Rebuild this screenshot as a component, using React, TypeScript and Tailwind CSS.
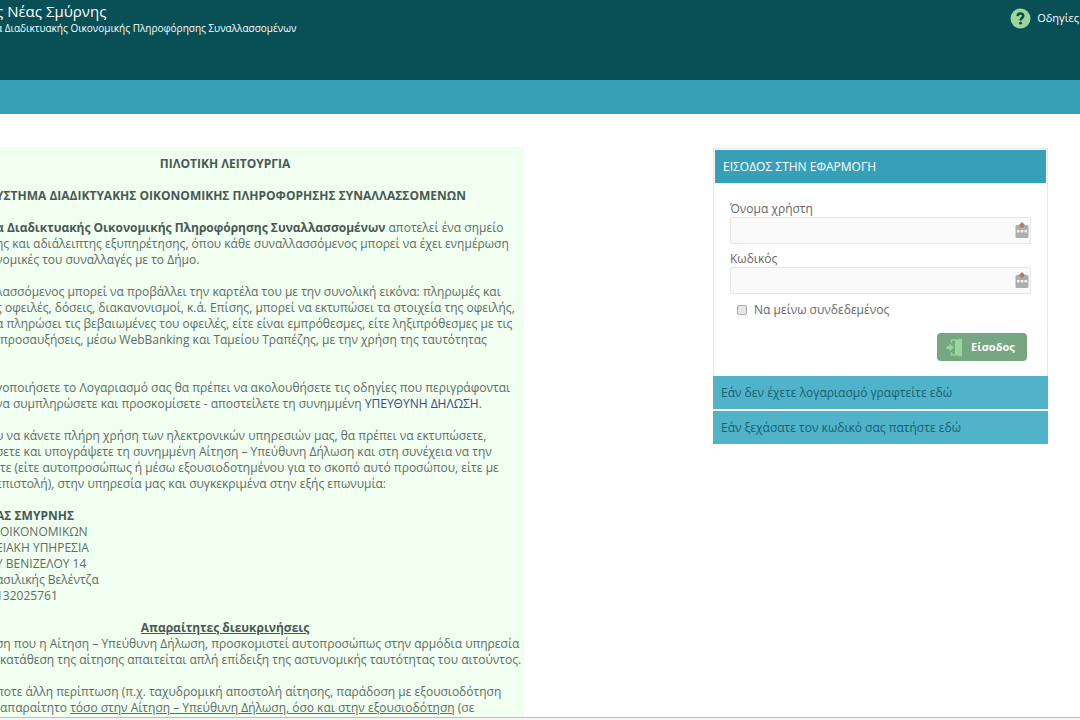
import type { ReactNode } from "react";

type LineProps = { children?: ReactNode; className?: string };

function Line({ children, className = "" }: LineProps) {
  return <div className={`h-4 whitespace-nowrap ${className}`}>{children}</div>;
}

function HelpIcon() {
  return (
    <svg width="21" height="21" viewBox="0 0 21 21" aria-hidden="true">
      <circle cx="10.5" cy="10.5" r="10" fill="#9bd59a" />
      <path
        d="M7.6 8.1C7.7 6.2 8.9 5.5 10.4 5.5C12.2 5.5 13.3 6.5 13.3 7.9C13.3 10 10.6 10.1 10.6 12.4"
        fill="none"
        stroke="#0b4a42"
        strokeWidth="2.4"
      />
      <circle cx="10.6" cy="15.2" r="1.4" fill="#0b4a42" />
    </svg>
  );
}

function KeyboardIcon() {
  return (
    <svg width="14" height="17" viewBox="0 0 14 17" aria-hidden="true">
      <rect x="0.5" y="3" width="13" height="13" rx="1.5" fill="#adadad" />
      <path d="M7 0L10.5 3.5H8.5V5.5H5.5V3.5H3.5Z" fill="#b9716c" />
      <path d="M2 8H4.5V10.5H2ZM5.75 8H8.25V10.5H5.75ZM9.5 8H12V10.5H9.5Z" fill="#f3f3f3" />
    </svg>
  );
}

function EnterIcon() {
  return (
    <svg width="17" height="19" viewBox="0 0 17 19" aria-hidden="true">
      <path d="M9 2.5L13 0.8H16V18.2H13L9 16.5Z" fill="#98d69b" />
      <path d="M5.5 5V2H10M5.5 14V17H10" fill="none" stroke="#98d69b" strokeWidth="1.4" />
      <path d="M0.5 8H3.5V5.5L8 9.5L3.5 13.5V11H0.5Z" fill="#98d69b" />
    </svg>
  );
}

function Header() {
  return (
    <header className="shrink-0">
      <div className="flex h-20 justify-between bg-[#084f56] text-white">
        <div className="-ml-1 whitespace-nowrap pt-px">
          <h1 className="text-[15px] leading-5">ς Νέας Σμύρνης</h1>
          <p className="text-[10px] leading-[14px]">
            α Διαδικτυακής Οικονομικής Πληροφόρησης Συναλλασσομένων
          </p>
        </div>
        <a href="#help" className="flex h-9 items-center gap-1.5 pr-px text-[11px]">
          <HelpIcon />
          Οδηγίες
        </a>
      </div>
      <div className="h-[34px] bg-[#389fb8]" />
    </header>
  );
}

function Announcement() {
  return (
    <article className="min-w-0 flex-1 overflow-hidden bg-[#f0fff0] pt-[9px] text-[12px] leading-4 text-[#5f6b67]">
      <div className="-ml-1">
        <Line className="pr-[70px] text-center font-bold text-[#4a5854]">ΠΙΛΟΤΙΚΗ ΛΕΙΤΟΥΡΓΙΑ</Line>
        <Line />
        <Line className="font-bold text-[#4a5854]">
          ΥΣΤΗΜΑ ΔΙΑΔΙΚΤΥΑΚΗΣ ΟΙΚΟΝΟΜΙΚΗΣ ΠΛΗΡΟΦΟΡΗΣΗΣ ΣΥΝΑΛΛΑΣΣΟΜΕΝΩΝ
        </Line>
        <Line />
        <Line>
          <b className="text-[#4a5854]">α Διαδικτυακής Οικονομικής Πληροφόρησης Συναλλασσομένων</b> αποτελεί ένα σημείο
        </Line>
        <Line>ης και αδιάλειπτης εξυπηρέτησης, όπου κάθε συναλλασσόμενος μπορεί να έχει ενημέρωση</Line>
        <Line>νομικές του συναλλαγές με το Δήμο.</Line>
        <Line />
        <Line>λασσόμενος μπορεί να προβάλλει την καρτέλα του με την συνολική εικόνα: πληρωμές και</Line>
        <Line>ς οφειλές, δόσεις, διακανονισμοί, κ.ά. Επίσης, μπορεί να εκτυπώσει τα στοιχεία της οφειλής,</Line>
        <Line>α πληρώσει τις βεβαιωμένες του οφειλές, είτε είναι εμπρόθεσμες, είτε ληξιπρόθεσμες με τις</Line>
        <Line className="pl-1">προσαυξήσεις, μέσω WebBanking και Ταμείου Τραπέζης, με την χρήση της ταυτότητας</Line>
        <Line />
        <Line />
        <Line>γοποιήσετε το Λογαριασμό σας θα πρέπει να ακολουθήσετε τις οδηγίες που περιγράφονται</Line>
        <Line>
          να συμπληρώσετε και προσκομίσετε - αποστείλετε τη συνημμένη{" "}
          <a href="#declaration" className="text-[#3b4a84]">ΥΠΕΥΘΥΝΗ ΔΗΛΩΣΗ</a>.
        </Line>
        <Line />
        <Line>υ να κάνετε πλήρη χρήση των ηλεκτρονικών υπηρεσιών μας, θα πρέπει να εκτυπώσετε,</Line>
        <Line>σετε και υπογράψετε τη συνημμένη Αίτηση – Υπεύθυνη Δήλωση και στη συνέχεια να την</Line>
        <Line className="pl-1">τε (είτε αυτοπροσώπως ή μέσω εξουσιοδοτημένου για το σκοπό αυτό προσώπου, είτε με</Line>
        <Line>επιστολή), στην υπηρεσία μας και συγκεκριμένα στην εξής επωνυμία:</Line>
        <Line />
        <Line className="font-bold text-[#4a5854]">ΑΣ ΣΜΥΡΝΗΣ</Line>
        <Line className="pl-1">ΟΙΚΟΝΟΜΙΚΩΝ</Line>
        <Line>ΕΙΑΚΗ ΥΠΗΡΕΣΙΑ</Line>
        <Line>Υ ΒΕΝΙΖΕΛΟΥ 14</Line>
        <Line>ασιλικής Βελέντζα</Line>
        <Line>132025761</Line>
        <Line />
        <Line className="pr-[70px] text-center font-bold text-[#4a5854] underline">Απαραίτητες διευκρινήσεις</Line>
        <Line>ση που η Αίτηση – Υπεύθυνη Δήλωση, προσκομιστεί αυτοπροσώπως στην αρμόδια υπηρεσία</Line>
        <Line className="pl-1">κατάθεση της αίτησης απαιτείται απλή επίδειξη της αστυνομικής ταυτότητας του αιτούντος.</Line>
        <Line />
        <Line>ποτε άλλη περίπτωση (π.χ. ταχυδρομική αποστολή αίτησης, παράδοση με εξουσιοδότηση</Line>
        <Line className="pl-1">
          απαραίτητο <u>τόσο στην Αίτηση – Υπεύθυνη Δήλωση, όσο και στην εξουσιοδότηση</u> (σε
        </Line>
      </div>
    </article>
  );
}

type FieldProps = { id: string; label: string; type: string };

function Field({ id, label, type }: FieldProps) {
  return (
    <div>
      <label htmlFor={id} className="block leading-4">{label}</label>
      <div className="flex h-[27px] items-center rounded-xs border border-[#e6e6e6] bg-[#fafafa] pr-px">
        <input id={id} type={type} className="h-full min-w-0 flex-1 px-2 outline-none" />
        <button type="button" aria-label="Πληκτρολόγιο">
          <KeyboardIcon />
        </button>
      </div>
    </div>
  );
}

function LoginPanel() {
  return (
    <aside className="w-[335px] shrink-0 self-start text-[12px] text-[#666]">
      <form className="mt-px border border-b-0 border-[#e4e8e8] p-px" onSubmit={(e) => e.preventDefault()}>
        <h2 className="flex h-[33px] items-center bg-[#389fb8] px-2 text-white">ΕΙΣΟΔΟΣ ΣΤΗΝ ΕΦΑΡΜΟΓΗ</h2>
        <div className="flex flex-col gap-[7px] px-[15px] pt-[18px] pb-[14px]">
          <Field id="username" label="Όνομα χρήστη" type="text" />
          <Field id="password" label="Κωδικός" type="password" />
          <label className="flex h-4 items-center gap-[7px] pt-px pl-[7px]">
            <input
              type="checkbox"
              className="size-[10px] appearance-none rounded-xs border border-[#aaa] bg-[#e6e6e6] checked:bg-[#389fb8]"
            />
            Να μείνω συνδεδεμένος
          </label>
          <button
            type="submit"
            className="mt-[9px] mr-1 flex h-7 w-[90px] items-center gap-2 self-end rounded-sm bg-[#76a682] pl-[9px] text-[11px] font-bold text-white"
          >
            <EnterIcon />
            Είσοδος
          </button>
        </div>
      </form>
      <nav className="flex flex-col gap-0.5 text-[#17606c]">
        <a href="#register" className="flex h-[33px] items-center bg-[#50b3ca] px-2">
          Εάν δεν έχετε λογαριασμό γραφτείτε εδώ
        </a>
        <a href="#reset" className="flex h-[33px] items-center bg-[#50b3ca] px-2">
          Εάν ξεχάσατε τον κωδικό σας πατήστε εδώ
        </a>
      </nav>
    </aside>
  );
}

export default function App() {
  return (
    <div className="flex h-screen flex-col overflow-hidden bg-white font-['Open_Sans',sans-serif]">
      <Header />
      <main className="flex min-h-0 flex-1 gap-[189px] overflow-hidden pt-[33px] pr-8">
        <Announcement />
        <LoginPanel />
      </main>
      <div className="h-[3px] shrink-0 border-t border-[#bdbdbd] bg-[#f5f5f5]" />
    </div>
  );
}
